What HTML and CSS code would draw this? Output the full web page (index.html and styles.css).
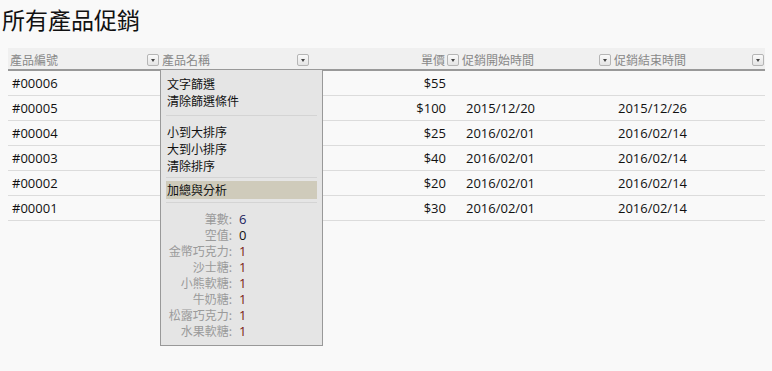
FILE: index.html
```html
<!DOCTYPE html>
<html lang="zh-Hant">
<head>
  <meta charset="UTF-8" />
  <title>所有產品促銷</title>
  <link rel="stylesheet" href="styles.css">
</head>
<body>
  <h1 class="page-title">所有產品促銷</h1>

  <div class="grid-wrap">
    <table class="data-grid">
      <colgroup>
        <col class="c-id"><col class="c-name"><col class="c-price"><col class="c-start"><col class="c-end">
      </colgroup>
      <thead>
        <tr>
          <th><div class="th-inner"><span>產品編號</span><button class="dd-btn"></button></div></th>
          <th><div class="th-inner"><span>產品名稱</span><button class="dd-btn"></button></div></th>
          <th><div class="th-inner right"><span>單價</span><button class="dd-btn"></button></div></th>
          <th><div class="th-inner"><span>促銷開始時間</span><button class="dd-btn"></button></div></th>
          <th><div class="th-inner"><span>促銷結束時間</span><button class="dd-btn"></button></div></th>
        </tr>
      </thead>
      <tbody>
        <tr><td>#00006</td><td></td><td class="num">$55</td><td></td><td></td></tr>
        <tr><td>#00005</td><td></td><td class="num">$100</td><td>2015/12/20</td><td>2015/12/26</td></tr>
        <tr><td>#00004</td><td></td><td class="num">$25</td><td>2016/02/01</td><td>2016/02/14</td></tr>
        <tr><td>#00003</td><td></td><td class="num">$40</td><td>2016/02/01</td><td>2016/02/14</td></tr>
        <tr><td>#00002</td><td></td><td class="num">$20</td><td>2016/02/01</td><td>2016/02/14</td></tr>
        <tr><td>#00001</td><td></td><td class="num">$30</td><td>2016/02/01</td><td>2016/02/14</td></tr>
      </tbody>
    </table>

    <!-- filter menu opened on 產品名稱 -->
    <div class="filter-menu">
      <div class="menu-item">文字篩選</div>
      <div class="menu-item">清除篩選條件</div>
      <div class="menu-sep"></div>
      <div class="menu-item">小到大排序</div>
      <div class="menu-item">大到小排序</div>
      <div class="menu-item">清除排序</div>
      <div class="menu-sep sep-tight"></div>
      <div class="menu-item active">加總與分析</div>
      <div class="menu-sep sep-tight"></div>
      <div class="stats">
        <div class="stat-row"><span class="s-label">筆數:</span><span class="s-val v-count">6</span></div>
        <div class="stat-row"><span class="s-label">空值:</span><span class="s-val">0</span></div>
        <div class="stat-row"><span class="s-label">金幣巧克力:</span><span class="s-val v-item">1</span></div>
        <div class="stat-row"><span class="s-label">沙士糖:</span><span class="s-val v-item">1</span></div>
        <div class="stat-row"><span class="s-label">小熊軟糖:</span><span class="s-val v-item">1</span></div>
        <div class="stat-row"><span class="s-label">牛奶糖:</span><span class="s-val v-item">1</span></div>
        <div class="stat-row"><span class="s-label">松露巧克力:</span><span class="s-val v-item">1</span></div>
        <div class="stat-row"><span class="s-label">水果軟糖:</span><span class="s-val v-item">1</span></div>
      </div>
    </div>
  </div>
</body>
</html>
```

FILE: styles.css
```css
/* --- Page --- */
html, body {
  margin: 0;
}
body {
  background: #f9f9f9;
  color: #111;
  font-family: 'Open Sans', 'Noto Sans CJK TC', sans-serif;
  font-size: 13px;
}
.page-title {
  font-family: 'Noto Sans CJK TC', sans-serif;
  font-weight: 400;
  font-size: 23px;
  line-height: 34px;
  margin: 0;
  padding: 2px 0 0 2px;
  height: 48px;
  box-sizing: border-box;
}

/* --- Grid --- */
.grid-wrap {
  position: relative;
  margin-left: 8px;
  width: 757px;
  min-height: 320px;
}
.data-grid {
  width: 757px;
  border-collapse: collapse;
  table-layout: fixed;
}
.c-id { width: 152px; }
.c-name { width: 150px; }
.c-price { width: 150px; }
.c-start { width: 152px; }
.c-end { width: 153px; }

.data-grid th {
  background: #f0f0f0;
  color: #888;
  font-family: 'Noto Sans CJK TC', sans-serif;
  font-weight: 400;
  font-size: 12px;
  height: 19px;
  padding: 2px 0 0 0;
  border-bottom: 2px solid #999;
  text-align: left;
}
.th-inner {
  display: flex;
  align-items: center;
  padding: 0 1px 0 2px;
}
.th-inner span { flex: 1; }
.th-inner.right span { text-align: right; padding-right: 2px; }
.dd-btn {
  width: 12px;
  height: 12px;
  padding: 0;
  border: 1px solid #b5b5b5;
  border-radius: 2px;
  background: linear-gradient(#fafafa, #e4e4e4);
  position: relative;
  flex-shrink: 0;
}
.dd-btn::after {
  content: "";
  position: absolute;
  left: 3px;
  top: 4px;
  border-left: 2px solid transparent;
  border-right: 2px solid transparent;
  border-top: 3px solid #444;
  width: 0;
}

.data-grid td {
  height: 24px;
  padding: 0 0 0 4px;
  border-bottom: 1px solid #dcdcdc;
  white-space: nowrap;
}
.data-grid td:nth-child(4),
.data-grid td:nth-child(5) { padding-left: 6px; }
.data-grid td.num {
  text-align: right;
  padding: 0 14px 0 0;
}

/* --- Filter menu --- */
.filter-menu {
  position: absolute;
  left: 152px;
  top: 21px;
  width: 161px;
  height: 270px;
  background: #e5e5e5;
  border: 1px solid #999;
  padding-top: 5px;
  font-family: 'Noto Sans CJK TC', sans-serif;
  font-size: 12px;
  z-index: 5;
}
.menu-item {
  line-height: 17px;
  padding-left: 6px;
  color: #111;
}
.menu-item.active {
  background: #cfcbbb;
  margin: 0 5px;
  padding-left: 1px;
  line-height: 18px;
}
.menu-sep {
  border-top: 1px solid #d4d4d4;
  margin: 6px 5px 7px;
}
.menu-sep.sep-tight { margin: 3px 5px; }

.stats {
  margin-top: 8px;
}
.stat-row {
  display: flex;
  gap: 7px;
  height: 16px;
  line-height: 16px;
}
.s-label {
  width: 71px;
  text-align: right;
  color: #9a9a9a;
}
.s-val {
  font-family: 'Open Sans', sans-serif;
  font-size: 13px;
  color: #111;
}
.v-count { color: #1c1c5e; }
.v-item { color: #7a1a12; }
```
